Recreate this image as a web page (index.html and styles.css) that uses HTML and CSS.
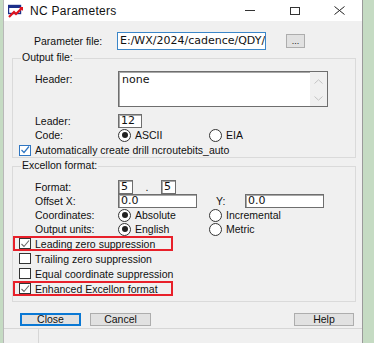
FILE: index.html
```html
<!DOCTYPE html>
<html lang="en">
<head>
    <meta charset="UTF-8">
    <meta name="viewport" content="width=device-width, initial-scale=1.0">
    <title>NC Parameters</title>
    <link rel="stylesheet" href="styles.css">
</head>
<body>
    <div class="window">
        <div class="titlebar">
            <svg class="app-icon" width="16" height="14" viewBox="0 0 16 14">
                <rect x="0.5" y="1.5" width="12" height="8" fill="#fff" stroke="#1c2f8a" stroke-width="1.4"/>
                <rect x="1" y="2" width="11" height="2" fill="#1c2f8a"/>
                <path d="M1 13 L6 8 L8 10 L14 4" fill="none" stroke="#e0141e" stroke-width="2.2"/>
                <path d="M11 3 L15 3 L15 7 Z" fill="#e0141e"/>
            </svg>
            <span class="title">NC Parameters</span>
            <div class="caption-buttons">
                <div class="caption-btn"><span class="min-line"></span></div>
                <div class="caption-btn"><span class="max-box"></span></div>
                <div class="caption-btn">
                    <svg width="11" height="9" viewBox="0 0 11 9"><path d="M0.5 0.5 L10.5 8.5 M10.5 0.5 L0.5 8.5" stroke="#222" stroke-width="1"/></svg>
                </div>
            </div>
        </div>

        <div class="content">
            <div class="param-row">
                <span class="label">Parameter file:</span>
                <div class="input param-input"><span class="caret"></span>E:/WX/2024/cadence/QDY/</div>
                <button class="btn browse">...</button>
            </div>

            <div class="group group-output">
                <div class="group-title">Output file:</div>
                <div class="row header-row">
                    <span class="label">Header:</span>
                    <div class="textarea">
                        <div class="textarea-text">none</div>
                        <div class="scrollbar">
                            <svg width="9" height="5" viewBox="0 0 9 5"><path d="M0.5 4.5 L4.5 0.8 L8.5 4.5" fill="none" stroke="#c4c4c4"/></svg>
                            <svg width="9" height="5" viewBox="0 0 9 5"><path d="M0.5 0.5 L4.5 4.2 L8.5 0.5" fill="none" stroke="#c4c4c4"/></svg>
                        </div>
                    </div>
                </div>
                <div class="row leader-row">
                    <span class="label">Leader:</span>
                    <div class="input leader-input">12</div>
                </div>
                <div class="row">
                    <span class="label">Code:</span>
                    <span class="option"><span class="radio checked"></span>ASCII</span>
                    <span class="option"><span class="radio"></span>EIA</span>
                </div>
                <div class="row check-row">
                    <span class="checkbox blue">
                        <svg width="10" height="10" viewBox="0 0 10 10"><path d="M1.5 5 L4 7.5 L9 1.5" fill="none" stroke="#2f76c2" stroke-width="1.2"/></svg>
                    </span>
                    <span>Automatically create drill ncroutebits_auto</span>
                </div>
            </div>

            <div class="group group-excellon">
                <div class="group-title">Excellon format:</div>
                <div class="row format-row">
                    <span class="label">Format:</span>
                    <div class="input small-input">5</div>
                    <span class="dot">.</span>
                    <div class="input small-input">5</div>
                </div>
                <div class="row">
                    <span class="label">Offset X:</span>
                    <div class="input offset-input">0.0</div>
                    <span class="y-label">Y:</span>
                    <div class="input offset-input">0.0</div>
                </div>
                <div class="row">
                    <span class="label">Coordinates:</span>
                    <span class="option"><span class="radio checked"></span>Absolute</span>
                    <span class="option"><span class="radio"></span>Incremental</span>
                </div>
                <div class="row">
                    <span class="label">Output units:</span>
                    <span class="option"><span class="radio checked"></span>English</span>
                    <span class="option"><span class="radio"></span>Metric</span>
                </div>
                <div class="row check-row tall">
                    <span class="highlight">
                        <span class="checkbox">
                            <svg width="10" height="10" viewBox="0 0 10 10"><path d="M1.5 5 L4 7.5 L9 1.5" fill="none" stroke="#6a6a6a" stroke-width="1.1"/></svg>
                        </span>
                        <span>Leading zero suppression</span>
                    </span>
                </div>
                <div class="row check-row tall">
                    <span class="checkbox"></span>
                    <span>Trailing zero suppression</span>
                </div>
                <div class="row check-row tall">
                    <span class="checkbox"></span>
                    <span>Equal coordinate suppression</span>
                </div>
                <div class="row check-row tall">
                    <span class="highlight">
                        <span class="checkbox">
                            <svg width="10" height="10" viewBox="0 0 10 10"><path d="M1.5 5 L4 7.5 L9 1.5" fill="none" stroke="#6a6a6a" stroke-width="1.1"/></svg>
                        </span>
                        <span>Enhanced Excellon format</span>
                    </span>
                </div>
            </div>

            <div class="button-row">
                <button class="btn default">Close</button>
                <button class="btn">Cancel</button>
                <button class="btn help">Help</button>
            </div>
        </div>

        <div class="statusbar">
            <div class="status-cell first"></div>
            <div class="status-cell"></div>
        </div>
    </div>
</body>
</html>
```

FILE: styles.css
```css
body {
    margin: 0;
    background-color: #c5dbc3;
    font-family: "Liberation Sans", Arial, sans-serif;
    font-size: 10.5px;
    color: #111;
    overflow: hidden;
}
.window {
    margin-left: 3px;
    width: 358px;
    height: 343px;
    background-color: #f0f0f0;
    border-left: 1px solid #b8b8b8;
    border-right: 1px solid #9a9a9a;
    display: flex;
    flex-direction: column;
}
.titlebar {
    height: 21px;
    background-color: #fff;
    display: flex;
    align-items: center;
    flex-shrink: 0;
}
.app-icon {
    margin-left: 4px;
}
.title {
    margin-left: 6px;
    font-size: 12px;
    letter-spacing: 0.3px;
    color: #111;
}
.caption-buttons {
    margin-left: auto;
    display: flex;
    height: 100%;
}
.caption-btn {
    width: 45px;
    display: flex;
    align-items: center;
    justify-content: center;
}
.min-line {
    width: 10px;
    height: 1px;
    background-color: #333;
}
.max-box {
    width: 8px;
    height: 6px;
    border: 1px solid #333;
}
.content {
    padding: 11px 6px 0 8px;
    flex: 1;
}
.label {
    width: 83px;
    padding-left: 22px;
    flex-shrink: 0;
}
.param-row {
    display: flex;
    align-items: center;
    height: 18px;
}
.input {
    background-color: #fff;
    border: 1px solid #6e6e6e;
    box-shadow: inset 1px 1px 0 #a8a8a8;
    font-family: "DejaVu Sans", Verdana, sans-serif;
    font-size: 11px;
    line-height: 12px;
    padding-left: 2px;
    box-sizing: border-box;
    overflow: hidden;
    white-space: nowrap;
    color: #111;
    flex-shrink: 0;
}
.param-input {
    width: 149px;
    height: 18px;
    border-color: #3b86c8;
    box-shadow: none;
    line-height: 16px;
    display: flex;
    align-items: center;
}
.caret {
    width: 1px;
    height: 12px;
    background-color: #222;
}
.btn {
    font-family: "Liberation Sans", Arial, sans-serif;
    font-size: 10.5px;
    background-color: #e1e1e1;
    border: 1px solid #adadad;
    padding: 0;
    color: #111;
    box-sizing: border-box;
    height: 13px;
    line-height: 11px;
}
.browse {
    width: 19px;
    height: 14px;
    margin-left: 20px;
    line-height: 10px;
    font-size: 9px;
}
.group {
    border: 1px solid #dadada;
    display: flex;
    flex-direction: column;
}
.group-output {
    margin-top: 8px;
}
.group-excellon {
    margin-top: 8px;
    padding-bottom: 5px;
}
.group-title {
    align-self: flex-start;
    margin-top: -8px;
    margin-left: 8px;
    padding: 0 1px;
    height: 13px;
    line-height: 13px;
    background-color: #f0f0f0;
}
.row {
    display: flex;
    align-items: center;
    height: 14px;
}
.header-row {
    align-items: flex-start;
    height: 36px;
    margin-top: 7px;
}
.header-row .label {
    padding-top: 2px;
}
.textarea {
    width: 210px;
    height: 36px;
    background-color: #fff;
    border: 1px solid #6e6e6e;
    box-shadow: inset 1px 1px 0 #a8a8a8;
    box-sizing: border-box;
    display: flex;
}
.textarea-text {
    flex: 1;
    padding: 2px 0 0 3px;
    font-family: "DejaVu Sans", Verdana, sans-serif;
    font-size: 11px;
    line-height: 12px;
}
.scrollbar {
    width: 17px;
    background-color: #f0f0f0;
    display: flex;
    flex-direction: column;
    justify-content: space-between;
    align-items: center;
    padding: 7px 0 5px;
}
.leader-row {
    margin-top: 7px;
}
.leader-input {
    width: 24px;
    height: 14px;
}
.small-input {
    width: 15px;
    height: 14px;
}
.option {
    display: flex;
    align-items: center;
    width: 91px;
}
.radio {
    width: 11px;
    height: 11px;
    border: 1px solid #333;
    border-radius: 50%;
    background-color: #fff;
    margin-right: 4px;
    display: flex;
    align-items: center;
    justify-content: center;
    flex-shrink: 0;
}
.radio.checked::after {
    content: "";
    width: 6px;
    height: 6px;
    border-radius: 50%;
    background-color: #222;
}
.check-row {
    padding-left: 6px;
    margin-top: 1px;
    white-space: nowrap;
}
.check-row.tall {
    height: 15px;
    margin-top: 0;
}
.checkbox {
    width: 12px;
    height: 11px;
    border: 1px solid #333;
    background-color: #fff;
    box-sizing: border-box;
    margin-right: 4px;
    display: flex;
    align-items: center;
    justify-content: center;
    flex-shrink: 0;
}
.checkbox.blue {
    border-color: #2f76c2;
}
.check-row .highlight {
    display: flex;
    align-items: center;
    width: 160px;
    height: 15px;
    margin-left: -6px;
    padding-left: 6px;
    box-sizing: border-box;
    border: 2px solid #e8202a;
    padding-left: 4px;
}
.format-row {
    margin-top: 8px;
}
.dot {
    width: 28px;
    text-align: center;
}
.offset-input {
    width: 79px;
    height: 14px;
}
.y-label {
    width: 29px;
    padding-left: 19px;
}
.button-row {
    display: flex;
    margin-top: 11px;
    padding-left: 8px;
    padding-right: 2px;
}
.button-row .btn {
    width: 61px;
    margin-right: 9px;
}
.btn.default {
    border: 2px solid #0a78d4;
    line-height: 9px;
}
.btn.help {
    margin-left: auto;
    margin-right: 0;
    width: 60px;
}
.statusbar {
    height: 14px;
    border-top: 1px solid #d6d6d6;
    display: flex;
    flex-shrink: 0;
}
.status-cell.first {
    width: 34px;
    border-right: 1px solid #d6d6d6;
}
```
